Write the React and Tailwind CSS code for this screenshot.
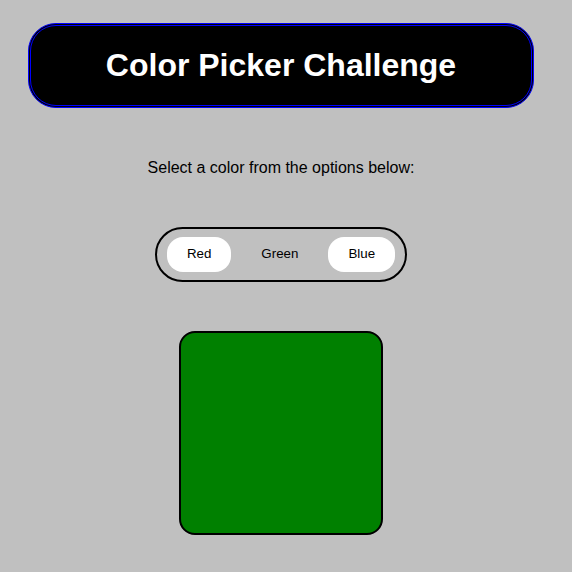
export default function App() {
  const font = { fontFamily: '"Liberation Sans", Arial, sans-serif' };
  return (
    <div className="min-h-[572px] w-[572px] bg-[#c0c0c0] pr-[10px]" style={font}>
      <div className="flex flex-col items-center pt-[23px]">
        <div className="flex h-[85px] w-[506px] items-center justify-center rounded-[28px] border-[3px] border-double border-[#0000ff] bg-black">
          <h1 className="text-[32px] font-bold leading-[37px] text-white">Color Picker Challenge</h1>
        </div>
        <p className="mt-[51px] text-[16px] leading-[18px] text-black">Select a color from the options below:</p>
        <div className="mt-[50px] flex h-[55px] items-center gap-[10px] rounded-full border-2 border-black px-[10px]">
          <button className="h-[35px] rounded-[16px] bg-white px-5 pb-[2px] text-[13.33px] leading-[15px] text-black">Red</button>
          <button className="h-[35px] rounded-[16px] bg-transparent px-5 pb-[2px] text-[13.33px] leading-[15px] text-black">Green</button>
          <button className="h-[35px] rounded-[16px] bg-white px-5 pb-[2px] text-[13.33px] leading-[15px] text-black">Blue</button>
        </div>
        <div className="mt-[49px] h-[204px] w-[204px] rounded-[16px] border-2 border-black bg-[#008000]" />
      </div>
    </div>
  );
}
